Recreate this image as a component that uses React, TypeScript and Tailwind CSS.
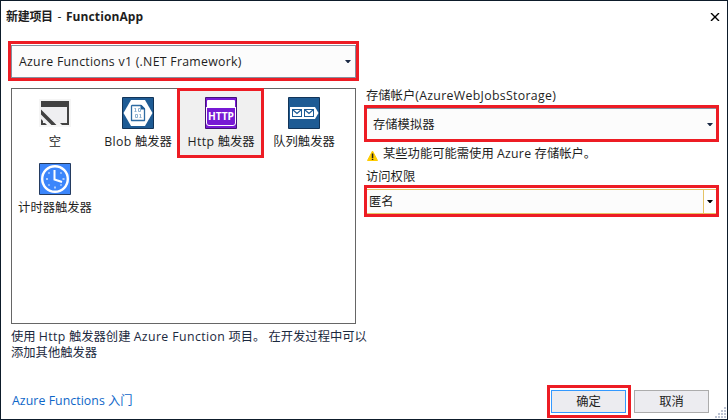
import type { ReactNode } from "react";

function Caret({ color = "#1b2a45" }: { color?: string }) {
  return (
    <svg width="6" height="3" viewBox="0 0 6 3" className="shrink-0" fill={color}>
      <path d="M0 0h6L3.500 3h-1z" />
    </svg>
  );
}

function EmptyIcon() {
  return (
    <svg width="32" height="32" viewBox="0 0 32 32">
      <path fill="#f5f5f5" d="M0 2h32v28H0z" />
      <path fill="#efeff1" d="M2 10h26v16H2z" />
      <path fill="#424242" d="M2 4h28v6H2zM28 10h2v18h-7l-2-2h7zM2 12.500l15.500 15.500h-5L2 17.500zM2 22l2 2v2h2l2 2H2z" />
    </svg>
  );
}

function BlobIcon() {
  return (
    <svg width="32" height="32" viewBox="0 0 32 32">
      <path fill="#1e5b94" stroke="#123458" d="M.5.500h31v31H.5z" />
      <path fill="#fff" d="M9 3h14l7.500 13L23 29H9L1.500 16z" />
      <path fill="#fff" stroke="#2d6ba2" strokeWidth="1.300" strokeLinejoin="round" d="M10 8.500h9l3.500 3.500v11.500h-13V9z" />
      <path fill="#1e5b94" d="M18.500 8h1l3.500 3.500v1h-4.500z" />
      <g fill="none" stroke="#8fb2d1">
        <path d="M13.500 11v4M12.500 11.500H14M12.500 14.500h2M16.500 11.500h2v3h-2zM13.500 17.500h2v3h-2zM18.500 17v4M17.500 17.500h1M17.500 20.500h2" />
      </g>
    </svg>
  );
}

function HttpIcon() {
  return (
    <svg width="32" height="32" viewBox="0 0 32 32">
      <path fill="#7719d4" stroke="#431279" d="M.5.500h31v31H.5z" />
      <path fill="#fff" d="M3 3h26q1 0 1 1v7H2V4q0-1 1-1z" />
      <path fill="none" stroke="#fff" strokeWidth="1" d="M1.500 10v16q0 2.500 2.500 2.500h24q2.500 0 2.500-2.500V10" />
      <text x="3" y="23" fill="#fff" fontFamily="Open Sans, sans-serif" fontWeight="700" fontSize="10.500" textLength="26" lengthAdjust="spacingAndGlyphs">HTTP</text>
    </svg>
  );
}

function QueueIcon() {
  return (
    <svg width="32" height="32" viewBox="0 0 32 32">
      <path fill="#1e5b94" stroke="#123458" d="M.5.500h31v31H.5z" />
      <path fill="#fff" d="M2 10h25l3.500 6-3.500 6H2z" />
      <path fill="#1e5b94" d="M4 12h10v8H4zM16 12h10v8H16z" />
      <path fill="#fff" d="M5 13h8v6H5zM17 13h8v6h-8z" />
      <path fill="none" stroke="#1e5b94" strokeWidth="1.200" d="M4.500 12.500 9 16.500l4.500-4M16.500 12.500l4.500 4 4.500-4" />
    </svg>
  );
}

function TimerIcon() {
  return (
    <svg width="32" height="32" viewBox="0 0 32 32">
      <path fill="#3c86fb" stroke="#243b60" d="M.5.500h31v31H.5z" />
      <circle cx="16" cy="16" r="12.800" fill="none" stroke="#fff" strokeWidth="2.400" />
      <path fill="none" stroke="#fff" strokeWidth="2" d="M15.500 7v9.500l7.500 2.500" />
      <path stroke="#d3e5ff" strokeWidth="1.500" d="M7 16h2M23.500 16h2M16 23.500v2M9.500 9.500l1 1M21.500 10.500l1-1M9.500 22.500l1-1M21.500 21.500l1 1" />
    </svg>
  );
}

function Tile({ icon, children, selected = false }: { icon: ReactNode; children: ReactNode; selected?: boolean }) {
  return (
    <div
      className={
        selected
          ? "flex h-[70px] w-[87px] -mx-0.5 flex-col items-center border-[3px] border-[#ed1c24] bg-[#f0f0f0] pt-1.5"
          : "flex h-[66px] w-[83px] flex-col items-center pt-[9px]"
      }
    >
      {icon}
      <div className="mt-[5px] h-4 pl-px leading-4 whitespace-nowrap">{children}</div>
    </div>
  );
}

function Grip() {
  return (
    <svg width="12" height="12" viewBox="0 0 12 12" fill="#bcc3d3" shapeRendering="crispEdges">
      <path d="M9 0h2v2H9zM6 3h2v2H6zM9 3h2v2H9zM3 6h2v2H3zM6 6h2v2H6zM9 6h2v2H9zM0 9h2v2H0zM3 9h2v2H3zM6 9h2v2H6zM9 9h2v2H9z" />
    </svg>
  );
}

export default function App() {
  return (
    <div className="flex h-[420px] w-[728px] flex-col overflow-hidden border border-[#0d1b2a] bg-white font-['Open_Sans','Noto_Sans_CJK_SC',sans-serif] text-[12.300px] text-[#1e1e1e]">
      <header className="flex h-10 shrink-0 items-start justify-between pt-2 pr-[7px] pl-[5px]">
        <h1 className="text-[12px] leading-4 font-bold whitespace-nowrap">
          <span className="tracking-[-0.300px]">新建项目</span> <span className="mx-[1.500px] font-normal">-</span> <span className="tracking-[0.100px]">FunctionApp</span>
        </h1>
        <svg width="10" height="8" viewBox="0 0 10 8" className="mt-1" stroke="#000" strokeWidth="1.400">
          <path d="M1 0l8 8M9 0L1 8" />
        </svg>
      </header>

      <main className="flex h-[322px] shrink-0 pl-[7px]">
        <section className="w-[351px] shrink-0">
          <div className="h-10 border-[3px] border-[#ed1c24] pt-px">
            <div className="flex h-[33px] items-center justify-between border border-[#858f9e] bg-[#fcfcfc] pr-1 pl-[7px]">
              <span className="mt-0.5 tracking-[0.280px] whitespace-nowrap">Azure Functions v1 (.NET Framework)</span>
              <Caret />
            </div>
          </div>
          <div className="mt-[7px] ml-[3px] h-[236px] w-[345px] border border-[#666]">
            <div className="-mt-px ml-px flex h-[66px]">
              <Tile icon={<EmptyIcon />}>空</Tile>
              <Tile icon={<BlobIcon />}><span className="tracking-[0.400px]">Blob</span> 触发器</Tile>
              <Tile icon={<HttpIcon />} selected><span className="tracking-[0.400px]">Http</span> 触发器</Tile>
              <Tile icon={<QueueIcon />}>队列触发器</Tile>
            </div>
            <div className="ml-px flex">
              <Tile icon={<TimerIcon />}>计时器触发器</Tile>
            </div>
          </div>
          <p className="mt-[5px] ml-[3px] leading-4 whitespace-nowrap text-[#1b293e]">
            使用 <span className="tracking-[0.400px]">Http</span> 触发器创建 <span className="tracking-[0.400px]">Azure Function</span> 项目。 在开发过程中可以
            <br />
            添加其他触发器
          </p>
        </section>

        <section className="ml-[5px] w-[355px] pt-[47px]">
          <div className="ml-0.5 h-[17px] leading-4 whitespace-nowrap">
            存储帐户<span className="tracking-[0.330px]">(AzureWebJobsStorage)</span>
          </div>
          <div className="h-[37px] border-[3px] border-[#ed1c24]">
            <div className="flex h-full items-center justify-between border-t border-[#858f9e] bg-[#fcfcfc] pr-[3px] pl-1.5">
              <span className="mt-0.5">存储模拟器</span>
              <Caret />
            </div>
          </div>
          <div className="mt-1 ml-[3px] flex h-4 items-center gap-[5px] whitespace-nowrap">
            <svg width="11" height="11" viewBox="0 0 11 11" className="mt-0.5">
              <path fill="#fc0" stroke="#fc0" strokeLinejoin="round" d="M5.500 1 10.500 10.500H.5z" />
              <path fill="#222" d="M4.800 3.500h1.500V8H4.800zM4.800 8.700h1.500V10H4.800z" />
            </svg>
            <span>某些功能可能需使用 <span className="tracking-[0.300px]">Azure</span> 存储帐户。</span>
          </div>
          <div className="mt-[7px] ml-0.5 h-4 leading-4">访问权限</div>
          <div className="h-8 border-[3px] border-[#ed1c24] pt-px">
            <div className="flex h-[25px] items-stretch border-y border-[#e5c365] bg-[#fcfcfc]">
              <span className="flex flex-1 items-center pt-0.5 pl-0.5">匿名</span>
              <div className="flex w-[13px] items-center justify-center border-l border-[#e5c365] bg-white">
                <Caret color="#000" />
              </div>
            </div>
          </div>
        </section>
      </main>

      <footer className="flex flex-1 items-start pt-[22px] pl-[11px]">
        <a className="mt-2 leading-4 whitespace-nowrap text-[#0e66c8]">
          <span className="tracking-[0.070px]">Azure Functions</span> 入门
        </a>
        <div className="ml-auto h-[33px] w-[84px] border-[3px] border-[#ed1c24] px-px pt-0.5">
          <button className="ml-0 block h-[23px] w-[75px] border border-[#3399ff] bg-[#ececf0] leading-5">确定</button>
        </div>
        <button className="mt-[5px] ml-[3px] h-[23px] w-[75px] border border-[#acacac] bg-[#ececf0] leading-5">取消</button>
        <div className="ml-1.5 mt-[22px]">
          <Grip />
        </div>
      </footer>
    </div>
  );
}
